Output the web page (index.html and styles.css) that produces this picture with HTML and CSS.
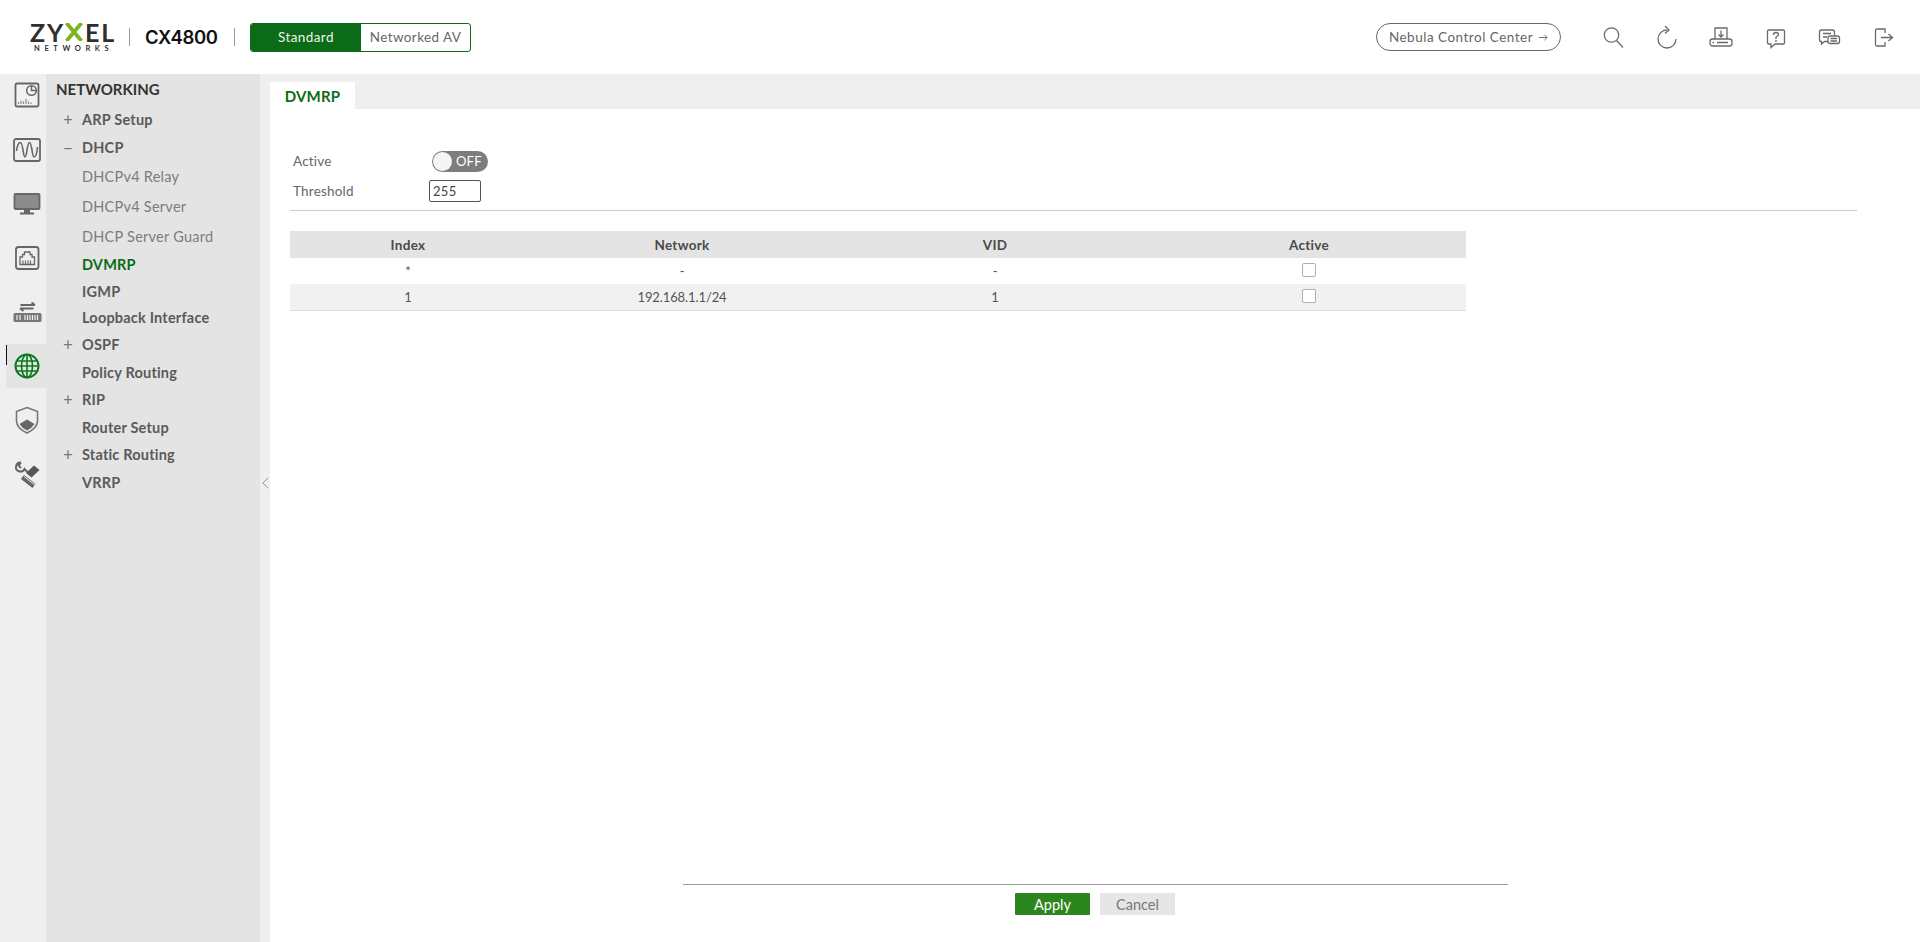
FILE: index.html
```html
<!DOCTYPE html>
<html lang="en">
<head>
<meta charset="utf-8">
<title>DVMRP</title>
<link rel="stylesheet" href="styles.css">
</head>
<body>
<header class="topbar">
  <div class="brand">
    <div class="logo">
      <div class="logo-main">ZY<svg class="logo-x" viewBox="0 0 18 18"><path d="M1.500 0L16.500 18M16.500 0L1.500 18" stroke="#7ab51d" stroke-width="3.800" fill="none"/></svg>EL</div>
      <div class="logo-sub">NETWORKS</div>
    </div>
    <span class="vsep"></span>
    <span class="model">CX4800</span>
    <span class="vsep"></span>
    <div class="mode">
      <span class="mode-on">Standard</span>
      <span class="mode-off">Networked AV</span>
    </div>
  </div>
  <div class="tools">
    <a class="nebula">Nebula Control Center
      <svg class="nebula-arrow" viewBox="0 0 10 10"><path d="M0 5H9M6 2l3 3-3 3" fill="none" stroke="#666" stroke-width="1"/></svg>
    </a>
    <div class="tool-icons">
      <svg viewBox="0 0 24 24"><circle cx="10.500" cy="10" r="7.200"/><path d="M15.500 15.500L22 22.500"/></svg>
      <svg viewBox="0 0 24 24"><path d="M12 5A9 9 0 1 0 21 14"/><path d="M10 1L14 5 10 8.500"/></svg>
      <svg viewBox="0 0 24 24"><path d="M6 14V3H18V14"/><path d="M12 5.500V12M9.500 9.500L12 12 14.500 9.500"/><rect x="1" y="14" width="22" height="7" rx="2.500"/><path d="M8 17.500H19M3.500 17.500H5"/></svg>
      <svg viewBox="0 0 24 24"><path d="M5.500 5H20.500Q21.500 5 21.500 6V18Q21.500 19 20.500 19H12L8 22.500V19H5.500Q4.500 19 4.500 18V6Q4.500 5 5.500 5Z"/><path d="M10.500 10Q10.500 7.500 13 7.500 15.500 7.500 15.500 9.500 15.500 11 13 12V14M13 15V17"/></svg>
      <svg viewBox="0 0 24 24"><path d="M11 16.500H7.500L4.500 19V16.500Q2.500 16.500 2.500 15V7Q2.500 5 4.500 5H15.500Q17.500 5 17.500 7V10.500"/><path d="M6 8.500H14M6 12H10"/><rect x="11" y="11" width="11.500" height="7.500" rx="2"/><path d="M13.500 13.500H20M13.500 16H20"/></svg>
      <svg viewBox="0 0 24 24"><path d="M14 8V4H6Q4.500 4 4.500 5.500V19.500Q4.500 21 6 21H14V17"/><path d="M10 12.500H21M17.500 9L21.500 12.500 17.500 16"/></svg>
    </div>
  </div>
</header>

<div class="body">
  <nav class="rail">
    <div class="rail-item"><svg viewBox="0 0 30 30"><rect x="3.500" y="2.500" width="23" height="23" rx="1.500" stroke="#666" fill="#f2f2f2" stroke-width="1.800"/><circle cx="19.500" cy="9.500" r="4.800" fill="none" stroke="#666" stroke-width="1.500"/><path d="M19.500 5V9.500H24" stroke="#666" fill="none" stroke-width="1.500"/><path d="M6.500 23V21M9 23V19.500M11.500 23V20.500M14 23V18M16.500 23V20.500M19 23V21.500" stroke="#888" stroke-width="1.200"/></svg></div>
    <div class="rail-item"><svg viewBox="0 0 30 30"><rect x="2" y="4" width="26" height="22" rx="2" fill="none" stroke="#666" stroke-width="1.800"/><path d="M4.500 16C5.500 8 7.500 7.500 8.500 7.500 11 7.500 11 22 13 22 15 22 15 7.500 17.500 7.500 20 7.500 20 22 22 22 24 22 25 18 25.500 12" fill="none" stroke="#666" stroke-width="1.600"/></svg></div>
    <div class="rail-item"><svg viewBox="0 0 30 30"><rect x="2.500" y="5" width="25" height="15" rx="1" fill="#8c8c8c" stroke="#666" stroke-width="1.800"/><path d="M12 21H18V23.500H22V25.500H8V23.500H12Z" fill="#666"/></svg></div>
    <div class="rail-item"><svg viewBox="0 0 30 30"><rect x="4" y="4" width="22.500" height="22" rx="2.500" fill="none" stroke="#666" stroke-width="1.800"/><path d="M8 21.500V14H10.500V11.500H12.500V9H18V11.500H20V14H22.500V21.500Z" fill="none" stroke="#666" stroke-width="1.300"/><path d="M11 21V17.500M13.500 21V17.500M16 21V17.500M18.500 21V17.500" stroke="#666" stroke-width="1.100"/></svg></div>
    <div class="rail-item"><svg viewBox="0 0 30 30"><path d="M8.500 8H23M19.500 5.500L23 8M21.500 11.500H8M11.500 14L8 11.500" fill="none" stroke="#666" stroke-width="1.800"/><rect x="1.500" y="16" width="28" height="9" rx="1.500" fill="#777"/><path d="M5 18V23M8 18V23M13 18V23M15.500 18V23M18 18V23M20.500 18V23M23 18V23M25.500 18V23" stroke="#eee" stroke-width="1.200"/></svg></div>
    <div class="rail-item rail-active"><svg viewBox="0 0 30 30"><circle cx="15" cy="15" r="11.500" fill="none" stroke="#0b7a1e" stroke-width="2"/><ellipse cx="15" cy="15" rx="5.500" ry="11.500" fill="none" stroke="#0b7a1e" stroke-width="1.600"/><path d="M15 3.500V26.500M3.500 15H26.500M5 10H25M5 20H25" stroke="#0b7a1e" stroke-width="1.600"/></svg></div>
    <div class="rail-item"><svg viewBox="0 0 30 30"><path d="M15 2.500L25.500 6.500V16Q25.500 23 15 28 4.500 23 4.500 16V6.500Z" fill="none" stroke="#777" stroke-width="1.600"/><path d="M7.500 19L15 14.500 22.500 19Q20 23 15 25.500 10 23 7.500 19Z" fill="#666"/></svg></div>
    <div class="rail-item"><svg viewBox="0 0 30 30"><path d="M9 3.500A4.500 4.500 0 1 0 12.500 10L15.500 13M9 3.500L6.500 6.500 9 9" fill="none" stroke="#666" stroke-width="2"/><path d="M14 14L22 6.500 27.500 11 19.500 18.500Z" fill="#555"/><path d="M10.500 18L22 27" fill="none" stroke="#666" stroke-width="5"/><path d="M12 17.500L23 26" fill="none" stroke="#eee" stroke-width="1"/></svg></div>
  </nav>
  <aside class="menu">
    <h2 class="menu-title">NETWORKING</h2>
    <ul class="menu-list">
      <li class="menu-item"><span class="mark">+</span>ARP Setup</li>
      <li class="menu-item"><span class="mark">&minus;</span>DHCP</li>
      <li class="menu-item sub"><span class="mark"></span>DHCPv4 Relay</li>
      <li class="menu-item sub"><span class="mark"></span>DHCPv4 Server</li>
      <li class="menu-item sub"><span class="mark"></span>DHCP Server Guard</li>
      <li class="menu-item current"><span class="mark"></span>DVMRP</li>
      <li class="menu-item short"><span class="mark"></span>IGMP</li>
      <li class="menu-item"><span class="mark"></span>Loopback Interface</li>
      <li class="menu-item"><span class="mark">+</span>OSPF</li>
      <li class="menu-item"><span class="mark"></span>Policy Routing</li>
      <li class="menu-item"><span class="mark">+</span>RIP</li>
      <li class="menu-item"><span class="mark"></span>Router Setup</li>
      <li class="menu-item"><span class="mark">+</span>Static Routing</li>
      <li class="menu-item"><span class="mark"></span>VRRP</li>
    </ul>
  </aside>
  <div class="gutter"><svg class="collapse" viewBox="0 0 8 14"><path d="M7 1L1 7l6 6" fill="none" stroke="#888" stroke-width="1"/></svg></div>
  <main class="content">
    <div class="tabbar"><span class="tab">DVMRP</span></div>
    <div class="panel">
      <div class="form-row">
        <label class="form-label">Active</label>
        <span class="toggle"><span class="knob"></span><span class="toggle-text">OFF</span></span>
      </div>
      <div class="form-row">
        <label class="form-label">Threshold</label>
        <input class="num" type="text" value="255">
      </div>
      <hr class="rule">
      <table class="grid">
        <colgroup><col class="c1"><col class="c2"><col class="c3"><col class="c4"></colgroup>
        <thead><tr><th>Index</th><th>Network</th><th>VID</th><th>Active</th></tr></thead>
        <tbody>
          <tr><td>*</td><td>-</td><td>-</td><td><span class="check"></span></td></tr>
          <tr class="alt"><td>1</td><td>192.168.1.1/24</td><td>1</td><td><span class="check"></span></td></tr>
        </tbody>
      </table>
    </div>
    <footer class="actions">
      <div class="actions-inner">
        <button class="btn apply" type="button">Apply</button>
        <button class="btn cancel" type="button">Cancel</button>
      </div>
    </footer>
  </main>
</div>
</body>
</html>
```
FILE: styles.css
```css
* { box-sizing: border-box; }
html, body { margin: 0; height: 100%; }
body {
  font-family: "Lato", "Open Sans", sans-serif;
  color: #555;
  background: #fff;
  overflow: hidden;
  height: 942px;
  display: flex;
  flex-direction: column;
}
.topbar {
  height: 74px;
  flex: none;
  display: flex;
  justify-content: space-between;
  align-items: center;
  padding: 0 25px 0 30px;
}
.brand, .tools { display: flex; align-items: center; }
.logo { width: 83px; padding-top: 1px; color: #333; }
.logo-main {
  font: 700 25px/20px "Lato", sans-serif;
  letter-spacing: 1.800px;
  display: flex;
  align-items: center;
  color: #2f2f2f;
  white-space: nowrap;
}
.logo-x { flex: none; width: 18px; height: 18px; margin: 0 2px 0 0; }
.logo-sub {
  font: 700 7.500px/9px "Lato", sans-serif;
  letter-spacing: 4.600px;
  margin: 2px 0 0 4px;
  white-space: nowrap;
}
.vsep { width: 1px; height: 18px; background: #999; }
.logo + .vsep { margin: 0 15px 0 16px; }
.model { font: 600 18.500px/24px "Inter", sans-serif; color: #111; letter-spacing: -.3px; width: 73px; margin-right: 16px; }
.mode {
  margin-left: 15px;
  width: 221px;
  height: 29px;
  display: flex;
  border: 1px solid #0b6b17;
  border-radius: 3px;
  overflow: hidden;
  font-size: 13.500px;
  letter-spacing: .4px;
}
.mode-on { width: 110px; background: #0b6b17; color: #eef5ea; display: flex; align-items: center; justify-content: center; }
.mode-off { flex: 1; display: flex; align-items: center; justify-content: center; color: #666; }
.nebula {
  width: 185px;
  height: 28px;
  border: 1px solid #666;
  border-radius: 14px;
  display: flex;
  align-items: center;
  justify-content: center;
  gap: 6px;
  font-size: 13.500px;
  letter-spacing: .5px;
  color: #666;
  margin-right: 40px;
}
.nebula-arrow { width: 9px; height: 9px; }
.tool-icons { display: flex; align-items: center; gap: 30px; }
.tool-icons svg {
  width: 24px;
  height: 24px;
  fill: none;
  stroke: #6a6a6a;
  stroke-width: 1.300;
}
.body { flex: 1; display: flex; min-height: 0; background: #efefef; }
.rail { width: 46px; flex: none; display: flex; flex-direction: column; gap: 10px; }
.rail-item {
  height: 44px;
  display: flex;
  align-items: center;
  justify-content: center;
  padding-left: 7px;
}
.rail-item svg { width: 30px; height: 30px; flex: none; }
.rail-active { background: #e4e4e4; margin-left: 6px; padding-left: 1px; position: relative; }
.rail-active::before { content: ""; position: absolute; left: 0; top: 1px; width: 1px; height: 20px; background: #111; }
.menu { width: 214px; flex: none; background: #e4e4e4; padding-top: 5px; }
.menu-title { margin: 0 0 0 10px; font: 700 15px/20px "Lato", sans-serif; color: #333; }
.menu-list { list-style: none; margin: 7px 0 0; padding: 0; }
.menu-item {
  height: 27.500px;
  display: flex;
  align-items: center;
  font-weight: 700;
  font-size: 14.500px;
  letter-spacing: .2px;
  color: #5a5a5a;
  white-space: nowrap;
}
.mark { width: 36px; padding-left: 17px; font-weight: 400; font-size: 17px; color: #777; }
.sub { font-weight: 400; color: #7c7c7c; height: 30px; letter-spacing: .25px; }
.short { height: 25px; }
.current { color: #0b6b17; }
.gutter { width: 10px; flex: none; position: relative; }
.collapse { position: absolute; left: 2px; top: 402px; width: 7px; height: 14px; }
.content { flex: 1; min-width: 0; background: #fff; display: flex; flex-direction: column; }
.tabbar { height: 35px; flex: none; background: #efefef; padding-top: 8px; }
.tab {
  display: inline-flex;
  align-items: center;
  justify-content: center;
  width: 85px;
  height: 27px;
  background: #fff;
  color: #0b6b17;
  font-weight: 700;
  font-size: 15px;
  letter-spacing: .2px;
}
.panel { flex: 1; padding: 37px 63px 0 20px; }
.form-row { display: flex; align-items: center; height: 30px; font-size: 13.500px; letter-spacing: .2px; }
.form-label { width: 139px; padding-left: 3px; color: #666; }
.toggle {
  width: 56px;
  height: 21px;
  border-radius: 11px;
  background: #7d7d7d;
  position: relative;
  margin-left: 3px;
  display: flex;
  align-items: center;
  padding-left: 24px;
}
.knob { position: absolute; left: 1px; top: 1px; width: 19px; height: 19px; border-radius: 50%; background: #f5f5f5; }
.toggle-text { color: #fff; font-size: 13px; }
.num {
  width: 52px;
  height: 22px;
  border: 1px solid #555;
  border-radius: 2px;
  padding: 0 3px;
  font: 400 13px "Lato", sans-serif;
  color: #444;
  background: #fff;
  letter-spacing: .3px;
}
.rule { border: 0; border-top: 1px solid #ccc; margin: 4px 0 20px; }
.grid { width: 1176px; border-collapse: collapse; table-layout: fixed; border-bottom: 1px solid #ddd; font-size: 13px; letter-spacing: -.1px; }
.c1 { width: 236px; } .c2 { width: 312px; } .c3 { width: 314px; } .c4 { width: 314px; }
.grid th { height: 27px; background: #e4e4e4; font-weight: 700; color: #4a4a4a; font-size: 13.500px; padding: 0; letter-spacing: .3px; }
.grid td { height: 26px; text-align: center; padding: 0; color: #555; }
.alt td { background: #f1f1f1; }
.check { display: inline-block; width: 14px; height: 14px; border: 1.500px solid #b0b0b0; border-radius: 2px; background: #fff; vertical-align: -1px; }
.actions { flex: none; height: 58px; display: flex; justify-content: center; }
.actions-inner {
  width: 825px;
  border-top: 1px solid #999;
  display: flex;
  justify-content: center;
  gap: 10px;
  padding-top: 8px;
  height: 40px;
}
.btn { width: 75px; height: 22px; border: 0; border-radius: 1px; font: 400 14.500px "Lato", sans-serif; padding: 0; }
.apply { background: #2a861d; color: #fff; }
.cancel { background: #e6e6e6; color: #777; }
```
